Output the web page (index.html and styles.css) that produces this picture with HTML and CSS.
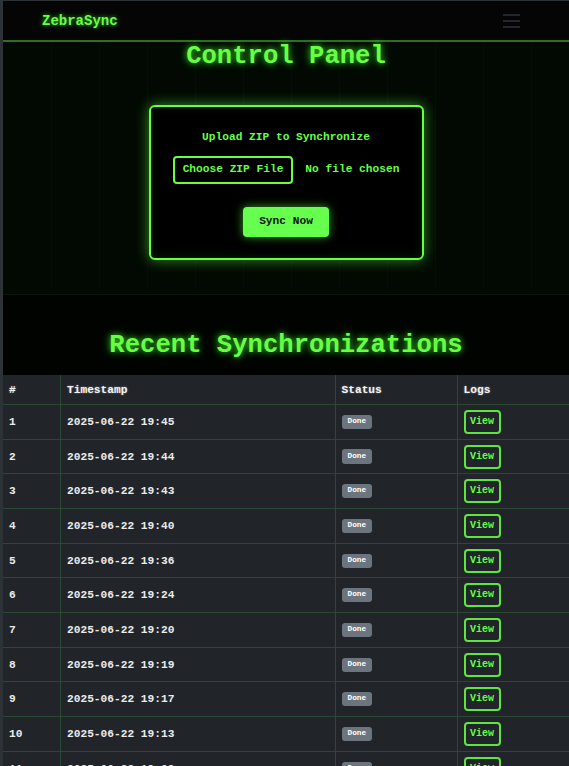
FILE: index.html
```html
<!DOCTYPE html>
<html lang="en">
<head>
<meta charset="utf-8">
<title>ZebraSync</title>
<link rel="stylesheet" href="styles.css">
</head>
<body>
<div class="page">
  <nav class="navbar">
    <span class="brand">ZebraSync</span>
    <button class="toggler" aria-label="Menu"><span></span><span></span><span></span></button>
  </nav>

  <section class="hero">
    <h1 class="title">Control Panel</h1>
    <form class="card">
      <p class="card-label">Upload ZIP to Synchronize</p>
      <div class="file-row">
        <span class="file-btn">Choose ZIP File</span>
        <span class="file-name">No file chosen</span>
      </div>
      <button type="button" class="sync-btn">Sync Now</button>
    </form>
  </section>

  <section class="history">
    <h2 class="title">Recent Synchronizations</h2>
  </section>

  <table class="sync-table">
    <colgroup>
      <col class="c-num"><col class="c-time"><col class="c-status"><col class="c-logs">
    </colgroup>
    <thead>
      <tr><th>#</th><th>Timestamp</th><th>Status</th><th>Logs</th></tr>
    </thead>
    <tbody>
      <tr><td>1</td><td>2025-06-22 19:45</td><td><span class="badge">Done</span></td><td><span class="view-btn">View</span></td></tr>
      <tr><td>2</td><td>2025-06-22 19:44</td><td><span class="badge">Done</span></td><td><span class="view-btn">View</span></td></tr>
      <tr><td>3</td><td>2025-06-22 19:43</td><td><span class="badge">Done</span></td><td><span class="view-btn">View</span></td></tr>
      <tr><td>4</td><td>2025-06-22 19:40</td><td><span class="badge">Done</span></td><td><span class="view-btn">View</span></td></tr>
      <tr><td>5</td><td>2025-06-22 19:36</td><td><span class="badge">Done</span></td><td><span class="view-btn">View</span></td></tr>
      <tr><td>6</td><td>2025-06-22 19:24</td><td><span class="badge">Done</span></td><td><span class="view-btn">View</span></td></tr>
      <tr><td>7</td><td>2025-06-22 19:20</td><td><span class="badge">Done</span></td><td><span class="view-btn">View</span></td></tr>
      <tr><td>8</td><td>2025-06-22 19:19</td><td><span class="badge">Done</span></td><td><span class="view-btn">View</span></td></tr>
      <tr><td>9</td><td>2025-06-22 19:17</td><td><span class="badge">Done</span></td><td><span class="view-btn">View</span></td></tr>
      <tr><td>10</td><td>2025-06-22 19:13</td><td><span class="badge">Done</span></td><td><span class="view-btn">View</span></td></tr>
      <tr><td>11</td><td>2025-06-22 19:08</td><td><span class="badge">Done</span></td><td><span class="view-btn">View</span></td></tr>
      <tr><td>12</td><td>2025-06-22 19:02</td><td><span class="badge">Done</span></td><td><span class="view-btn">View</span></td></tr>
    </tbody>
  </table>
</div>
</body>
</html>
```

FILE: styles.css
```css
html {
  background: #2c3236;
}
body {
  margin: 1px 0 0 3px;
  font-family: "Liberation Mono", "Courier New", monospace;
  overflow: hidden;
}
.page {
  background: #000;
}

/* navbar */
.navbar {
  height: 39px;
  background: #050505;
  border-bottom: 2px solid #2c7020;
  display: flex;
  align-items: center;
  justify-content: space-between;
  padding: 0 49px 0 39px;
}
.brand {
  color: #66ff44;
  font-weight: bold;
  font-size: 14px;
  text-shadow: 0 0 5px rgba(80, 255, 50, 0.7);
}
.toggler {
  background: none;
  border: none;
  padding: 0;
  width: 17px;
  display: flex;
  flex-direction: column;
  gap: 3.6px;
  margin-top: 1px;
}
.toggler span {
  display: block;
  height: 2px;
  background: #23272b;
}

/* hero */
.hero {
  background:
    repeating-linear-gradient(90deg, rgba(40, 120, 40, 0.05) 0 1px, transparent 1px 48px),
    #020902;
  border-bottom: 1px solid #0c180c;
  padding: 2px 0 34px;
  display: flex;
  flex-direction: column;
  align-items: center;
}
.title {
  margin: 0;
  color: #66ff44;
  font-weight: bold;
  font-size: 25.6px;
  text-shadow: 0 0 6px rgba(80, 255, 50, 0.75), 0 0 12px rgba(60, 255, 40, 0.35);
  text-align: center;
}
.hero .title {
  line-height: 1.05;
}
.card {
  margin-top: 34px;
  width: 271px;
  background: #000;
  border: 2px solid #66ff44;
  border-radius: 6px;
  box-shadow: 0 0 14px rgba(90, 255, 60, 0.55), inset 0 0 10px rgba(60, 200, 40, 0.15);
  padding: 24px 0 21px;
  display: flex;
  flex-direction: column;
  align-items: center;
}
.card-label {
  margin: 0;
  color: #66ff44;
  font-size: 11.2px;
  font-weight: bold;
  line-height: 13.4px;
}
.file-row {
  margin-top: 12px;
  display: flex;
  align-items: center;
  gap: 12px;
  font-size: 11.2px;
  font-weight: bold;
  color: #66ff44;
  line-height: 13.4px;
}
.file-btn {
  border: 2px solid #66ff44;
  border-radius: 4px;
  padding: 5px 8px;
}
.sync-btn {
  margin-top: 23px;
  font-family: inherit;
  font-size: 11.2px;
  font-weight: bold;
  line-height: 13.4px;
  color: #111;
  background: #66ff4d;
  border: none;
  border-radius: 4px;
  padding: 8.6px 16px;
  box-shadow: 0 0 10px rgba(90, 255, 60, 0.6);
}

/* history */
.history {
  background: #000300;
  padding: 35.5px 0 14px;
}
.history .title {
  line-height: 1.2;
}

/* table */
.sync-table {
  width: 100%;
  border-collapse: collapse;
  background: #212529;
  color: #ececec;
  font-size: 11.2px;
  font-weight: bold;
  table-layout: fixed;
}
.c-num { width: 57.5px; }
.c-time { width: 274.5px; }
.c-status { width: 122px; }
.sync-table th,
.sync-table td {
  border: 1px solid #2a4833;
  text-align: left;
  padding: 4.85px 6px;
  line-height: 16px;
  vertical-align: middle;
}
.sync-table tr > :first-child { border-left: none; }
.sync-table tr > :last-child { border-right: none; }
.sync-table thead th {
  border-top: none;
  font-weight: bold;
  color: #f4f4f4;
  padding: 6.5px 6px 6px;
  text-shadow: 0 0 2px rgba(255, 255, 255, 0.45);
}
.badge {
  display: inline-block;
  background: #6c757d;
  color: #fff;
  font-size: 7.8px;
  font-weight: bold;
  line-height: 1;
  padding: 3.2px 6px;
  border-radius: 3px;
  vertical-align: middle;
}
.view-btn {
  display: inline-block;
  box-sizing: border-box;
  height: 24px;
  border: 2px solid #5ee63e;
  border-radius: 4px;
  color: #66ff44;
  font-size: 10px;
  font-weight: bold;
  line-height: 12px;
  padding: 4px 4.5px;
  vertical-align: middle;
}
```
